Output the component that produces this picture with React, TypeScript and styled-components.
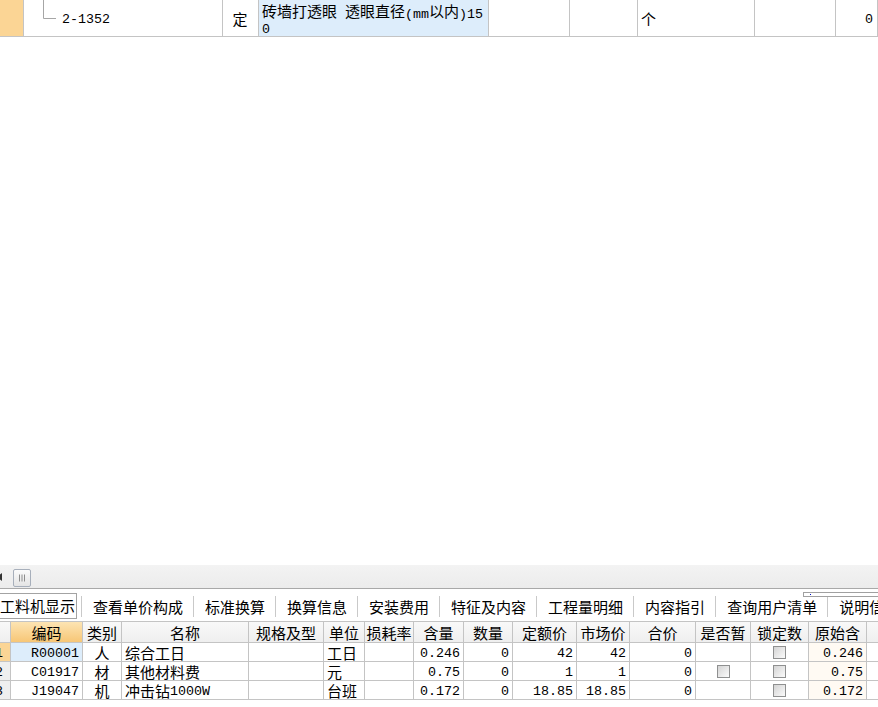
import React from 'react';
import styled, { createGlobalStyle } from 'styled-components';

const LINE = '#c4c4c4';
const ORANGE = '#fbd595';
const SELECT_BLUE = '#ddedfb';

const GlobalStyle = createGlobalStyle`
  html, body {
    margin: 0;
    padding: 0;
    background: #fff;
  }
  body {
    font-family: 'Noto Sans CJK SC', 'Liberation Sans', sans-serif;
    font-size: 15px;
    color: #000;
  }
`;

const Page = styled.div`
  width: 878px;
  height: 707px;
  padding-bottom: 7px;
  box-sizing: border-box;
  display: flex;
  flex-direction: column;
  overflow: hidden;
`;

/* ascii runs are drawn in a narrow mono face, like the original's SimSun */
const Mono = styled.span`
  font-family: 'Liberation Mono', 'DejaVu Sans Mono', monospace;
  font-size: 13.33px;
  position: relative;
  top: 1px;
`;

const Txt: React.FC<{ s: string }> = ({ s }) => {
  const parts = s.match(/[\x20-\x7e]+|[^\x20-\x7e]+/g) || [];
  return (
    <>
      {parts.map((p, i) =>
        /^[\x20-\x7e]+$/.test(p) ? <Mono key={i}>{p}</Mono> : <span key={i}>{p}</span>
      )}
    </>
  );
};

type Align = 'left' | 'center' | 'right';
const justify = (a?: Align) =>
  a === 'center' ? 'center' : a === 'right' ? 'flex-end' : 'flex-start';

/* ---------- upper list row ---------- */

const TopRow = styled.div`
  display: grid;
  grid-template-columns: 24px 199px 36px 230px 81px 68px 117px 81px 42px;
  height: 37px;
  flex: none;
  border-bottom: 1px solid ${LINE};
  box-sizing: border-box;
`;

const TopCell = styled.div<{ $align?: Align; $bg?: string }>`
  display: flex;
  align-items: center;
  justify-content: ${p => justify(p.$align)};
  padding: 0 4px 0 3px;
  border-right: 1px solid ${LINE};
  background: ${p => p.$bg || '#fff'};
  box-sizing: border-box;
  line-height: 15px;
  white-space: nowrap;
  overflow: hidden;
`;

const TreeCell = styled(TopCell)`
  align-items: stretch;
  padding-left: 19px;
  gap: 6px;
`;

const TreeCode = styled.div`
  display: flex;
  align-items: center;
`;

const DescCell = styled(TopCell)`
  display: block;
  padding: 3px 0 0 3px;
`;

const Line = styled.div`
  white-space: nowrap;
  height: 15px;
`;

const TreeConnector = () => (
  <svg width="13" height="36" viewBox="0 0 13 36" style={{ flex: 'none' }}>
    <path d="M0.5 0 V18.5 H13" stroke="#a6a6a6" strokeWidth="1" fill="none" />
  </svg>
);

/* ---------- splitter / scroll strip ---------- */

const Blank = styled.div`
  flex: 1;
  background: #fff;
`;

const ScrollStrip = styled.div`
  height: 24px;
  flex: none;
  display: flex;
  align-items: center;
  background: linear-gradient(#f3f3f3, #ececec);
  border-bottom: 1px solid #a9a9a9;
  box-sizing: border-box;
  overflow: hidden;
`;

const Arrow = styled.span`
  width: 0;
  height: 0;
  margin-left: -3px;
  border-top: 4px solid transparent;
  border-bottom: 4px solid transparent;
  border-right: 5px solid #333;
`;

const Thumb = styled.div`
  width: 18px;
  height: 18px;
  margin-left: 11px;
  margin-top: 2px;
  display: flex;
  align-items: center;
  justify-content: center;
  border: 1px solid #a7afbb;
  border-radius: 2px;
  background: linear-gradient(#fbfbfb, #e4e4e4);
  box-sizing: border-box;
`;

const Grip = () => (
  <svg width="8" height="8" viewBox="0 0 8 8">
    <path d="M1.5 0.5V7.5M4 0.5V7.5M6.5 0.5V7.5" stroke="#8d8d8d" strokeWidth="1" />
  </svg>
);

/* ---------- tab strip ---------- */

const TabBar = styled.div`
  position: relative;
  height: 32px;
  flex: none;
  display: flex;
  align-items: center;
  padding-top: 2px;
  box-sizing: border-box;
  white-space: nowrap;
  overflow: hidden;
  background: #fff;
`;

const ActiveTab = styled.div`
  margin-left: -2px;
  margin-right: 4px;
  padding: 2px 1px;
  line-height: 20px;
  border: 1px solid #a3a3a3;
  background: #fff;
`;

const Tab = styled.div`
  padding: 0 10px 0 11px;
  line-height: 21px;
  border-left: 1px solid #c9c9c9;
`;

const SplitMark = styled.div`
  position: absolute;
  left: 803px;
  top: 3px;
  width: 80px;
  height: 5px;
  border: 1px solid #a0a0a0;
  background: #fff;
  box-sizing: border-box;

  &::after {
    content: '';
    position: absolute;
    left: 6px;
    top: 1px;
    width: 1px;
    height: 1px;
    background: #0010c8;
  }
`;

/* ---------- resource grid ---------- */

const COLS = [11, 72, 39, 127, 75, 41, 49, 50, 49, 64, 53, 66, 55, 58, 58];

const GridBox = styled.div`
  flex: none;
  border-top: 1px solid ${LINE};
`;

const GridRow = styled.div<{ $height: number }>`
  display: grid;
  grid-template-columns: ${COLS.map(c => `${c}px`).join(' ')} 1fr;
  height: ${p => p.$height}px;
  border-bottom: 1px solid ${LINE};
  box-sizing: border-box;
`;

const Cell = styled.div<{ $align?: Align; $bg?: string; $last?: boolean }>`
  display: flex;
  align-items: center;
  justify-content: ${p => justify(p.$align)};
  padding: 0 3px;
  border-right: ${p => (p.$last ? 'none' : `1px solid ${LINE}`)};
  background: ${p => p.$bg || '#fff'};
  box-sizing: border-box;
  line-height: 15px;
  white-space: nowrap;
  overflow: hidden;
`;

const HeadCell = styled(Cell)`
  background: ${p => p.$bg || 'linear-gradient(#f9f9f9, #efefef)'};
`;

const RowNo = styled(Cell)`
  justify-content: flex-end;
  padding: 0 7px 0 0;
`;

const Check = styled.span`
  width: 13px;
  height: 13px;
  border: 1px solid #8f9090;
  background: linear-gradient(135deg, #d4d4d4, #fbfbfb);
  box-sizing: border-box;
`;

const HEADERS = ['编码', '类别', '名称', '规格及型', '单位', '损耗率', '含量', '数量', '定额价', '市场价', '合价', '是否暂', '锁定数', '原始含'];
const ALIGNS: Align[] = ['right', 'center', 'left', 'left', 'left', 'right', 'right', 'right', 'right', 'right', 'right', 'center', 'center', 'right'];

interface Resource {
  code: string;
  kind: string;
  name: string;
  unit: string;
  qty: string;
  price: string;
  market: string;
  provisional: boolean;
  orig: string;
}

const RESOURCES: Resource[] = [
  { code: 'R00001', kind: '人', name: '综合工日', unit: '工日', qty: '0.246', price: '42', market: '42', provisional: false, orig: '0.246' },
  { code: 'C01917', kind: '材', name: '其他材料费', unit: '元', qty: '0.75', price: '1', market: '1', provisional: true, orig: '0.75' },
  { code: 'J19047', kind: '机', name: '冲击钻1000W', unit: '台班', qty: '0.172', price: '18.85', market: '18.85', provisional: false, orig: '0.172' },
];

const TABS = ['查看单价构成', '标准换算', '换算信息', '安装费用', '特征及内容', '工程量明细', '内容指引', '查询用户清单', '说明信息'];

const App: React.FC = () => {
  return (
    <>
      <GlobalStyle />
      <Page>
        <TopRow>
          <TopCell $bg={ORANGE} />
          <TreeCell>
            <TreeConnector />
            <TreeCode><Txt s="2-1352" /></TreeCode>
          </TreeCell>
          <TopCell $align="center">定</TopCell>
          <DescCell $bg={SELECT_BLUE}>
            <Line><Txt s="砖墙打透眼 透眼直径(mm以内)15" /></Line>
            <Line><Txt s="0" /></Line>
          </DescCell>
          <TopCell />
          <TopCell />
          <TopCell>个</TopCell>
          <TopCell />
          <TopCell $align="right"><Txt s="0" /></TopCell>
        </TopRow>

        <Blank />

        <ScrollStrip>
          <Arrow />
          <Thumb><Grip /></Thumb>
        </ScrollStrip>

        <TabBar>
          <ActiveTab>工料机显示</ActiveTab>
          {TABS.map(t => <Tab key={t}>{t}</Tab>)}
          <SplitMark />
        </TabBar>

        <GridBox>
          <GridRow $height={21}>
            <HeadCell />
            {HEADERS.map((h, i) => (
              <HeadCell key={h} $align="center" $bg={i === 0 ? 'linear-gradient(#fde4b3, #f7c676)' : undefined}>
                {h}
              </HeadCell>
            ))}
            <HeadCell $last />
          </GridRow>
          {RESOURCES.map((r, idx) => {
            const values: React.ReactNode[] = [
              <Txt s={r.code} />,
              r.kind,
              <Txt s={r.name} />,
              '',
              r.unit,
              '',
              <Txt s={r.qty} />,
              <Txt s="0" />,
              <Txt s={r.price} />,
              <Txt s={r.market} />,
              <Txt s="0" />,
              r.provisional ? <Check /> : '',
              <Check />,
              <Txt s={r.orig} />,
            ];
            return (
              <GridRow key={r.code} $height={19}>
                <RowNo $bg={idx === 0 ? ORANGE : '#efefef'}><Txt s={String(idx + 1)} /></RowNo>
                {values.map((v, i) => (
                  <Cell
                    key={i}
                    $align={ALIGNS[i]}
                    $bg={i === 0 && idx === 0 ? SELECT_BLUE : i === 13 ? '#fffaf3' : undefined}
                  >
                    {v}
                  </Cell>
                ))}
                <Cell $last />
              </GridRow>
            );
          })}
        </GridBox>
      </Page>
    </>
  );
};

export default App;
